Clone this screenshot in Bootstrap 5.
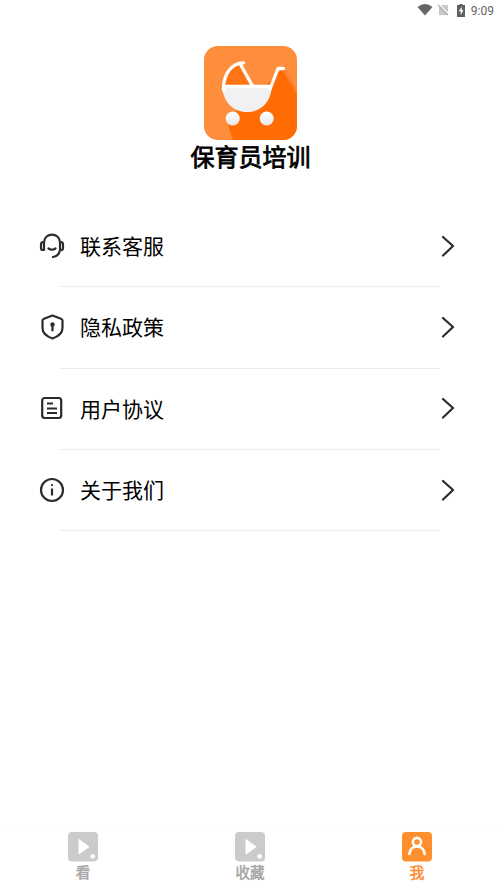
<!DOCTYPE html>
<html lang="zh-CN">
<head>
<meta charset="utf-8">
<meta name="viewport" content="width=device-width, initial-scale=1">
<title>保育员培训</title>
<link href="https://cdn.jsdelivr.net/npm/bootstrap@5.3.0/dist/css/bootstrap.min.css" rel="stylesheet">
<style>
body{font-family:"Noto Sans CJK SC",sans-serif;color:#000;background:#fff}
svg{display:block;flex:none}
.status-bar{height:20px;padding-right:7px;font:12px/20px Roboto,sans-serif;color:#666}
.clock{margin-left:6px;padding-top:1px}
.brand-block{padding-top:26px;height:185px}
.app-title{font-size:24px;line-height:32px;font-weight:400;-webkit-text-stroke:.8px #000}
.menu-item{height:81.33px;padding:0 46px 0 39px;font-size:21px;line-height:30px;color:#000}
.menu-label{margin-left:15px;padding-bottom:1px}
.divider{height:1px;margin:-1px 61px 0 60px;background:#ededed;transform:translateY(1px)}
.line-icon{fill:none;stroke:#2b2b2d;stroke-width:2.2;stroke-linecap:round;stroke-linejoin:round}
.tab-bar{height:67px;border-top:1px solid #fcfcfc}
.tab-item{padding:6px 1px 0 0;font-size:14.5px;line-height:19px;font-weight:400;color:#a6a6a6;-webkit-text-stroke:.5px currentColor}
.tab-item.active{color:#ff8a2b}
</style>
</head>
<body>
<div class="d-flex flex-column vh-100 overflow-hidden">
  <header class="status-bar d-flex justify-content-end align-items-center">
    <svg width="16" height="12" viewBox="0 0 16 12"><path fill="#666" d="M.5 3Q8-2.8 15.500 3L8 11.500Z"/></svg>
    <svg class="ms-1" width="12" height="12" viewBox="0 0 12 12"><path fill="#c8c8c8" d="M4 1h7v10H2V4z"/><path stroke="#fff" stroke-width="2" d="M1 0l11 11"/><path stroke="#aaa" stroke-width="1.200" d="M1 1l10 10"/></svg>
    <svg class="ms-2" width="8" height="13" viewBox="0 0 8 13"><path fill="#606060" d="M2.500 0h3v1H8v12H0V1h2.500z"/><path fill="#fff" d="M4.800 2.800 1.800 7.200h1.900V11l2.800-4.800H4.800z"/></svg>
    <span class="clock">9:09</span>
  </header>
  <section class="brand-block d-flex flex-column align-items-center">
    <svg width="93" height="94" viewBox="0 0 93 94">
      <defs><clipPath id="tile"><rect width="93" height="94" rx="14"/></clipPath>
      <linearGradient id="pearl" x2="0" y2="1"><stop stop-color="#fff"/><stop offset="1" stop-color="#e9e9eb"/></linearGradient></defs>
      <g clip-path="url(#tile)">
        <path fill="#ff8e3c" d="M0 0h93v94H0z"/>
        <path fill="#ff6c04" d="M22 73 60 42 78 23l15 25v46H29z"/>
        <path fill="#ff8130" d="m78 23 15 25V44L81 23z"/>
        <path fill="#ff7414" d="M21 40C23 27 30 19 38 18l11 23z"/>
        <path fill="#f1f1f3" d="M18 40h50C67 56 57 66 43 66S19 56 18 40Z"/>
        <path fill="none" stroke="#fff" stroke-width="3.300" stroke-linecap="round" stroke-linejoin="round" d="M19.500 44C19 29 27 17 39.500 16.800M36.500 18.500 48.500 40M19.500 40.500H66M66 43 74 22.500h5.500"/>
        <circle cx="28.700" cy="72.500" r="7" fill="url(#pearl)"/><circle cx="62.700" cy="72.500" r="7" fill="url(#pearl)"/>
      </g>
    </svg>
    <h1 class="app-title m-0">保育员培训</h1>
  </section>
  <nav class="d-flex flex-column flex-grow-1">
    <a class="menu-item d-flex align-items-center text-decoration-none">
      <svg class="line-icon" width="26" height="26" viewBox="0 0 26 26"><path d="M5 9C5.500-.8 20.500-.8 21 9M5 9v8H3.700Q2 17 2 15v-3.500Q2 9 4 9zM21 9v8h1.300q1.700 0 1.700-2v-3.500Q24 9 22 9zM21 17q-1 6-7 7M9.500 15.500q3.500 2.500 7 0"/></svg>
      <span class="menu-label flex-grow-1">联系客服</span>
      <svg class="line-icon" width="15" height="22" viewBox="0 0 15 22"><path d="M3 2l10 9L3 20.500"/></svg>
    </a>
    <div class="divider"></div>
    <a class="menu-item d-flex align-items-center text-decoration-none">
      <svg class="line-icon" width="26" height="26" viewBox="0 0 26 26"><path d="M13.500 1.500 22 4.700q1.500.5 1.500 2V14q0 7-10 10.500Q3.500 21 3.500 14V6.700q0-1.500 1.500-2z"/><circle cx="13.500" cy="10.500" r="1.500" fill="#2b2b2d" stroke-width="1.500"/><path d="M13.500 12v4.500"/></svg>
      <span class="menu-label flex-grow-1">隐私政策</span>
      <svg class="line-icon" width="15" height="22" viewBox="0 0 15 22"><path d="M3 2l10 9L3 20.500"/></svg>
    </a>
    <div class="divider"></div>
    <a class="menu-item d-flex align-items-center text-decoration-none">
      <svg class="line-icon" width="26" height="26" viewBox="0 0 26 26"><rect x="3.200" y="3" width="19" height="20" rx="2.500"/><path stroke-width="2" stroke-linecap="butt" d="M8 8.500h6M8 13.500h10M8 18h10"/></svg>
      <span class="menu-label flex-grow-1">用户协议</span>
      <svg class="line-icon" width="15" height="22" viewBox="0 0 15 22"><path d="M3 2l10 9L3 20.500"/></svg>
    </a>
    <div class="divider"></div>
    <a class="menu-item d-flex align-items-center text-decoration-none">
      <svg class="line-icon" width="26" height="26" viewBox="0 0 26 26"><circle cx="13" cy="13" r="11"/><path d="M13 11.500v7" stroke-linecap="butt"/><path d="M13 8v.1"/></svg>
      <span class="menu-label flex-grow-1">关于我们</span>
      <svg class="line-icon" width="15" height="22" viewBox="0 0 15 22"><path d="M3 2l10 9L3 20.500"/></svg>
    </a>
    <div class="divider"></div>
  </nav>
  <footer class="tab-bar row g-0 text-center">
    <div class="tab-item col d-flex flex-column align-items-center">
      <svg width="30" height="30" viewBox="0 0 30 30"><rect width="30" height="29.500" rx="4" fill="#cbcbcb"/><path fill="#fff" stroke="#fff" stroke-linejoin="round" d="M11 7.500v14.500l10-7.200z"/><circle cx="24.700" cy="24.300" r="2.400" fill="#fff"/></svg>
      <span>看</span>
    </div>
    <div class="tab-item col d-flex flex-column align-items-center">
      <svg width="30" height="30" viewBox="0 0 30 30"><rect width="30" height="29.500" rx="4" fill="#cbcbcb"/><path fill="#fff" stroke="#fff" stroke-linejoin="round" d="M11 7.500v14.500l10-7.200z"/><circle cx="24.700" cy="24.300" r="2.400" fill="#fff"/></svg>
      <span>收藏</span>
    </div>
    <div class="tab-item active col d-flex flex-column align-items-center">
      <svg width="30" height="30" viewBox="0 0 30 30"><rect width="30" height="29.500" rx="4" fill="#ff8f2d"/><g fill="none" stroke="#fff" stroke-width="2.600" stroke-linecap="round"><circle cx="15" cy="10" r="4.100"/><path d="M7.300 22Q8.500 14.500 15 14.500t7.700 7.500"/></g></svg>
      <span>我</span>
    </div>
  </footer>
</div>
<script src="https://cdn.jsdelivr.net/npm/bootstrap@5.3.0/dist/js/bootstrap.bundle.min.js"></script>
</body>
</html>
